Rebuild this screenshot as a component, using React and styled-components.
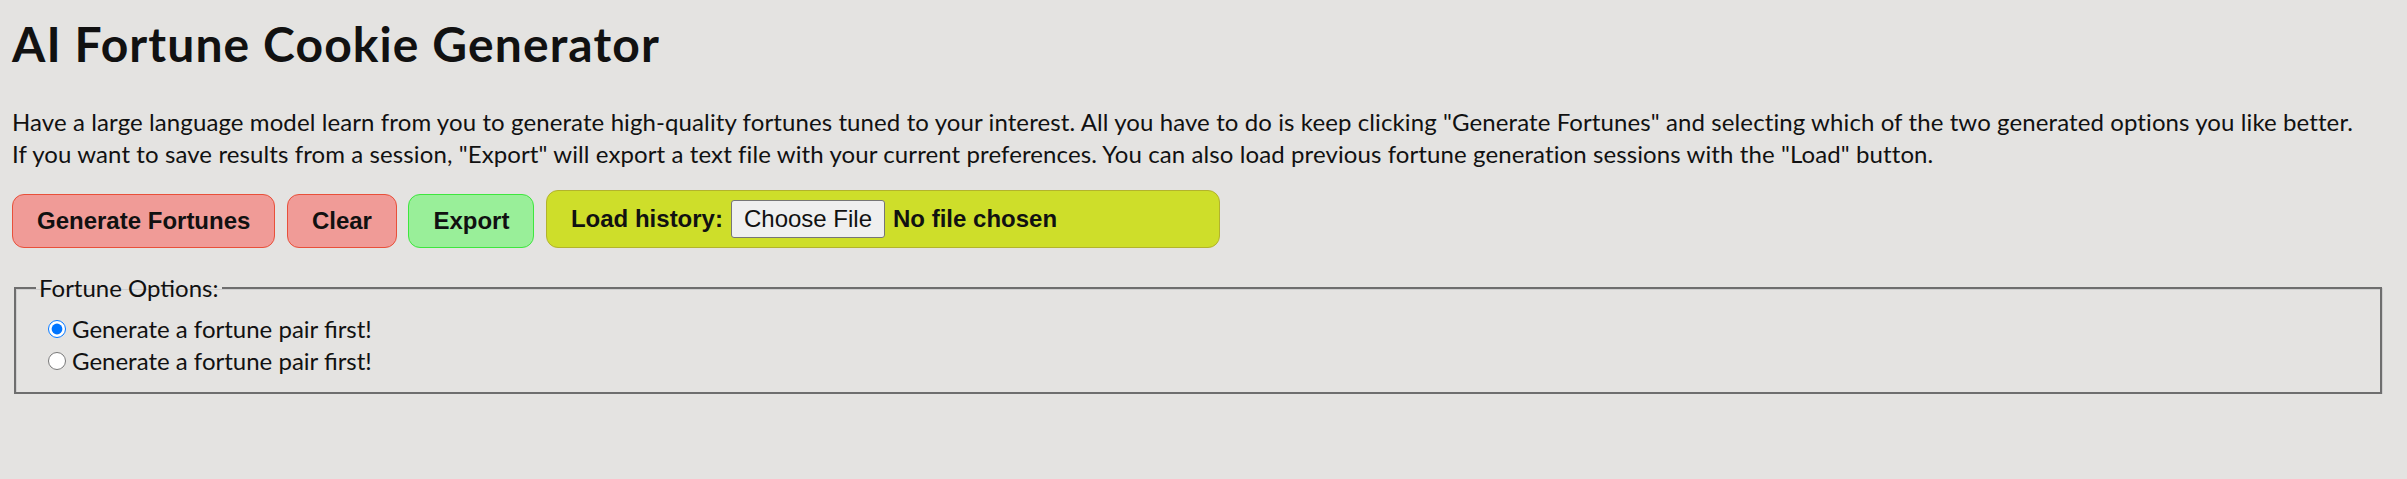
import React, { useState } from 'react'
import styled, { createGlobalStyle, css } from 'styled-components'

const GlobalStyle = createGlobalStyle`
    body {
        margin: 0;
        background: #e4e3e1;
        color: #111111;
        font-family: Lato, "Noto Sans", sans-serif;
    }
`

const Page = styled.div`
    padding: 12px 12px 0 12px;
`

const Title = styled.h1`
    margin: 0 0 30px 0;
    font-size: 48px;
    line-height: 64px;
    font-weight: 700;
    letter-spacing: 1.1px;
`

const Intro = styled.p`
    margin: 0 0 20px 0;
    font-size: 24px;
    line-height: 32px;
    letter-spacing: 0.1px;
    white-space: nowrap;
`

const Toolbar = styled.div`
    display: flex;
    align-items: flex-end;
    gap: 11.5px;
`

const tones = {
    red: css`
        background: #f09b97;
        border-color: #e8503a;
    `,
    green: css`
        background: #99ef99;
        border-color: #3ee63e;
    `,
}

const ActionButton = styled.button`
    box-sizing: border-box;
    height: 54px;
    padding: 12px 24px;
    border: 1px solid;
    border-radius: 12px;
    font-family: "Liberation Sans", Arial, sans-serif;
    font-size: 24px;
    font-weight: 700;
    line-height: 28px;
    color: #111111;
    cursor: pointer;
    ${props => tones[props.$tone]}
`

const LoadBox = styled.div`
    box-sizing: border-box;
    display: flex;
    align-items: center;
    width: 674px;
    height: 58px;
    padding: 0 24px;
    background: #cede2a;
    border: 1px solid #b3b32c;
    border-radius: 12px;
    font-family: "Liberation Sans", Arial, sans-serif;
    font-size: 24px;
    font-weight: 700;
`

const LoadLabel = styled.label`
    margin-right: 8px;
`

const FileInput = styled.input`
    font-family: "Liberation Sans", Arial, sans-serif;
    font-size: 24px;
    font-weight: 700;
    color: #111111;

    &::file-selector-button {
        box-sizing: border-box;
        height: 38px;
        margin-right: 8px;
        padding: 0 12px;
        font-family: "Liberation Sans", Arial, sans-serif;
        font-size: 24px;
        font-weight: 400;
        color: #111111;
        background: #efefef;
        border: 1px solid #767676;
        border-radius: 3px;
    }
`

const Options = styled.fieldset`
    margin: 24px 13px 0 2px;
    padding: 9px 20px 15px 20px;
    border: 2px solid #6e6e6e;
    box-shadow: inset 1px 1px 0 #cfcfcf, 1px 1px 0 #cfcfcf;
    font-size: 24px;
    line-height: 32px;
`

const Legend = styled.legend`
    padding: 0 3px;
`

const OptionRow = styled.label`
    display: flex;
    align-items: center;
    height: 32px;
`

const Radio = styled.input`
    width: 18px;
    height: 18px;
    margin: 0 6px 0 12px;
`

function App() {
    const [choice, setChoice] = useState(0)
    const fortunes = ['Generate a fortune pair first!', 'Generate a fortune pair first!']

    const optionElements = fortunes.map((fortune, index) => {
        return (
            <OptionRow key={index}>
                <Radio
                    type='radio'
                    name='fortune'
                    checked={choice === index}
                    onChange={() => setChoice(index)}
                />
                {fortune}
            </OptionRow>
        )
    })

    return (
        <Page>
            <GlobalStyle />
            <Title>AI Fortune Cookie Generator</Title>
            <Intro>
                Have a large language model learn from you to generate high-quality fortunes tuned to your interest. All you have to do is keep clicking "Generate Fortunes" and selecting which of the two generated options you like better.
                <br />
                If you want to save results from a session, "Export" will export a text file with your current preferences. You can also load previous fortune generation sessions with the "Load" button.
            </Intro>
            <Toolbar>
                <ActionButton $tone='red'>Generate Fortunes</ActionButton>
                <ActionButton $tone='red'>Clear</ActionButton>
                <ActionButton $tone='green'>Export</ActionButton>
                <LoadBox>
                    <LoadLabel htmlFor='history'>Load history:</LoadLabel>
                    <FileInput id='history' type='file' />
                </LoadBox>
            </Toolbar>
            <Options>
                <Legend>Fortune Options:</Legend>
                {optionElements}
            </Options>
        </Page>
    )
}

export default App
